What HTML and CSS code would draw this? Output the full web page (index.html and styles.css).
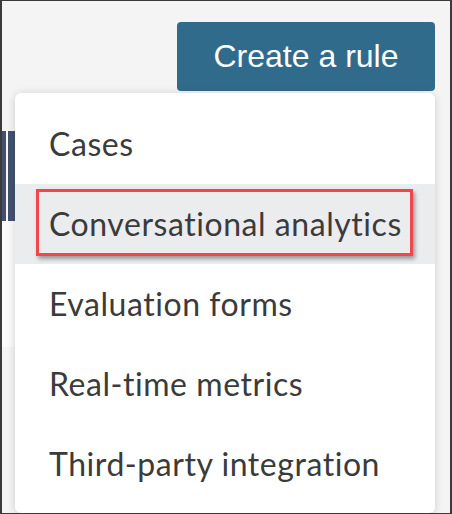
FILE: index.html
```html
<!DOCTYPE html>
<html lang="en">
<head>
<meta charset="utf-8">
<title>Create a rule</title>
<link rel="stylesheet" href="styles.css">
</head>
<body>
<div class="frame">
  <div class="toolbar">
    <button class="create">Create a rule</button>
  </div>
  <div class="content">
    <div class="panel">
      <div class="bar bar-a"></div>
      <div class="bar bar-b"></div>
    </div>
  </div>
  <ul class="menu">
    <li class="item">Cases</li>
    <li class="item active">Conversational analytics<span class="marker"></span></li>
    <li class="item">Evaluation forms</li>
    <li class="item">Real-time metrics</li>
    <li class="item">Third-party integration</li>
  </ul>
</div>
</body>
</html>
```
FILE: styles.css
```css
html, body {
  margin: 0;
  padding: 0;
  background: #ffffff;
}

.frame {
  position: relative;
  width: 452px;
  height: 514px;
  box-sizing: border-box;
  border-top: 1px solid #3a3a3a;
  border-bottom: 1px solid #3a3a3a;
  border-left: 2px solid #3a3a3a;
  border-right: 2px solid #3a3a3a;
  background: #f4f4f4;
  overflow: hidden;
}

.toolbar {
  display: flex;
  justify-content: flex-end;
  padding: 21px 15px 0 0;
}

.create {
  width: 258px;
  height: 69px;
  border: none;
  border-radius: 4px;
  background: #316b8c;
  color: #ffffff;
  font-family: "Liberation Sans", Arial, sans-serif;
  font-size: 32px;
  padding: 0;
}

.content {
  margin-top: 40px;
}

.panel {
  display: flex;
  gap: 2px;
  align-items: flex-start;
  width: 60px;
  height: 216px;
  background: #fafafa;
}

.bar {
  height: 90px;
  background: #41516f;
}

.bar-a {
  width: 4px;
}

.bar-b {
  width: 7px;
}

.menu {
  position: absolute;
  left: 13px;
  top: 92px;
  width: 420px;
  margin: 0;
  padding: 11px 0 9px 0;
  list-style: none;
  background: #ffffff;
  border-radius: 6px;
  box-shadow: 0 1px 8px rgba(0, 0, 0, 0.16);
}

.item {
  position: relative;
  height: 80px;
  line-height: 80px;
  padding-left: 34px;
  font-family: Lato, "Open Sans", sans-serif;
  font-size: 32px;
  letter-spacing: 0.55px;
  color: #3b3b3b;
  white-space: nowrap;
}

.item.active {
  background: #ebecee;
}

.marker {
  position: absolute;
  left: 21px;
  top: 5px;
  width: 377px;
  height: 67px;
  box-sizing: border-box;
  border: 3px solid #f2454c;
  box-shadow: 2px 3px 4px rgba(0, 0, 0, 0.35);
}
```
